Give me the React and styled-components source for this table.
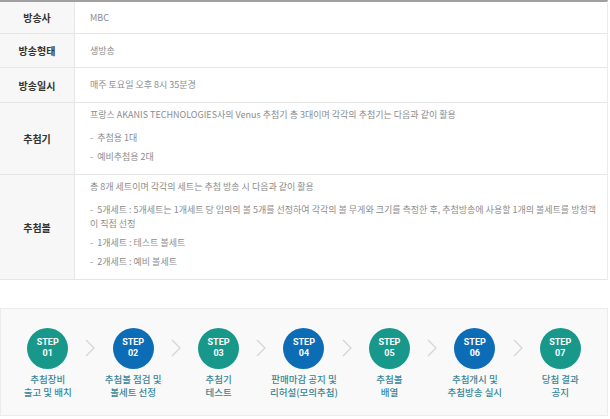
import React from "react";
import styled, { createGlobalStyle } from "styled-components";

const Global = createGlobalStyle`
  *, *::before, *::after { box-sizing: border-box; }
  body {
    margin: 0;
    background: #fff;
    font-family: "Noto Sans CJK KR", "Noto Sans", sans-serif;
  }
`;

const rows = [
  { label: "방송사", height: 32, lines: ["MBC"] },
  { label: "방송형태", height: 34, lines: ["생방송"] },
  { label: "방송일시", height: 35, lines: ["매주 토요일 오후 8시 35분경"] },
  {
    label: "추첨기",
    height: 72,
    lines: ["프랑스 AKANIS TECHNOLOGIES사의 Venus 추첨기 총 3대이며 각각의 추첨기는 다음과 같이 활용"],
    items: [["추첨용 1대"], ["예비추첨용 2대"]],
  },
  {
    label: "추첨볼",
    height: 105,
    lines: ["총 8개 세트이며 각각의 세트는 추첨 방송 시 다음과 같이 활용"],
    items: [
      [
        "5개세트 : 5개세트는 1개세트 당 임의의 볼 5개를 선정하여 각각의 볼 무게와 크기를 측정한 후, 추첨방송에 사용할 1개의 볼세트를 방청객",
        "이 직접 선정",
      ],
      ["1개세트 : 테스트 볼세트"],
      ["2개세트 : 예비 볼세트"],
    ],
  },
];

const steps = [
  { no: "01", color: "teal", text: ["추첨장비", "출고 및 배치"] },
  { no: "02", color: "blue", text: ["추첨볼 점검 및", "볼세트 선정"] },
  { no: "03", color: "teal", text: ["추첨기", "테스트"] },
  { no: "04", color: "blue", text: ["판매마감 공지 및", "리허설(모의추첨)"] },
  { no: "05", color: "teal", text: ["추첨볼", "배열"] },
  { no: "06", color: "blue", text: ["추첨개시 및", "추첨방송 실시"] },
  { no: "07", color: "teal", text: ["당첨 결과", "공지"] },
];

const Page = styled.div`
  width: 608px;
`;

const Table = styled.div`
  border-top: 2px solid #a0a0a0;
  border-right: 1px solid #ececec;
`;

const Row = styled.div`
  display: grid;
  grid-template-columns: 75px 1fr;
  height: ${(p) => p.$h}px;
  border-bottom: 1px solid #e6e6e6;
`;

const Label = styled.div`
  display: flex;
  align-items: center;
  justify-content: center;
  background: #f7f7f7;
  border-right: 1px solid #e6e6e6;
  font-size: 10px;
  font-weight: 700;
  color: #333;
`;

const Value = styled.div`
  display: flex;
  flex-direction: column;
  justify-content: ${(p) => (p.$single ? "center" : "flex-start")};
  padding: ${(p) => (p.$single ? "0 15px" : "5px 15px 0 15px")};
  font-size: 9px;
  line-height: 14px;
  color: #8c8c8c;
`;

const List = styled.ul`
  list-style: none;
  margin: 9px 0 0;
  padding: 0;
`;

const Item = styled.li`
  white-space: nowrap;
  & + & {
    margin-top: 5px;
  }
`;

const StepBox = styled.div`
  margin-top: 28px;
  height: 108px;
  border: 1px solid #ececec;
  background: #f9f9f9;
  display: flex;
  align-items: center;
  padding: 0 4px;
`;

const Step = styled.div`
  position: relative;
  flex: 1;
  display: flex;
  flex-direction: column;
  align-items: center;
  padding-top: 2px;
`;

const Circle = styled.div`
  width: 41px;
  height: 41px;
  border-radius: 50%;
  background: ${(p) => (p.$color === "blue" ? "#0d6cb6" : "#18988a")};
  color: #fff;
  font-family: Roboto, "Liberation Sans", sans-serif;
  font-size: 9px;
  font-weight: 700;
  line-height: 11.5px;
  text-align: center;
  display: flex;
  align-items: center;
  justify-content: center;
`;

const StepText = styled.div`
  margin-top: 4px;
  font-size: 9.5px;
  font-weight: 500;
  line-height: 13px;
  color: #3a8797;
  text-align: center;
  white-space: nowrap;
`;

const Arrow = styled.svg`
  position: absolute;
  right: -5px;
  top: 13px;
`;

export default function App() {
  return (
    <Page>
      <Global />
      <Table>
        {rows.map((r) => (
          <Row key={r.label} $h={r.height}>
            <Label>{r.label}</Label>
            <Value $single={!r.items}>
              {r.lines.map((l) => (
                <div key={l}>{l}</div>
              ))}
              {r.items && (
                <List>
                  {r.items.map((it) => (
                    <Item key={it[0]}>
                      - &nbsp;{it[0]}
                      {it.slice(1).map((t) => (
                        <React.Fragment key={t}>
                          <br />
                          {t}
                        </React.Fragment>
                      ))}
                    </Item>
                  ))}
                </List>
              )}
            </Value>
          </Row>
        ))}
      </Table>
      <StepBox>
        {steps.map((s, i) => (
          <Step key={s.no}>
            <Circle $color={s.color}>
              <span>
                STEP
                <br />
                {s.no}
              </span>
            </Circle>
            <StepText>
              {s.text[0]}
              <br />
              {s.text[1]}
            </StepText>
            {i < steps.length - 1 && (
              <Arrow width="10" height="18" viewBox="0 0 10 18">
                <path d="M1 1 L9 9 L1 17" fill="none" stroke="#d4d4d4" strokeWidth="1.2" />
              </Arrow>
            )}
          </Step>
        ))}
      </StepBox>
    </Page>
  );
}
